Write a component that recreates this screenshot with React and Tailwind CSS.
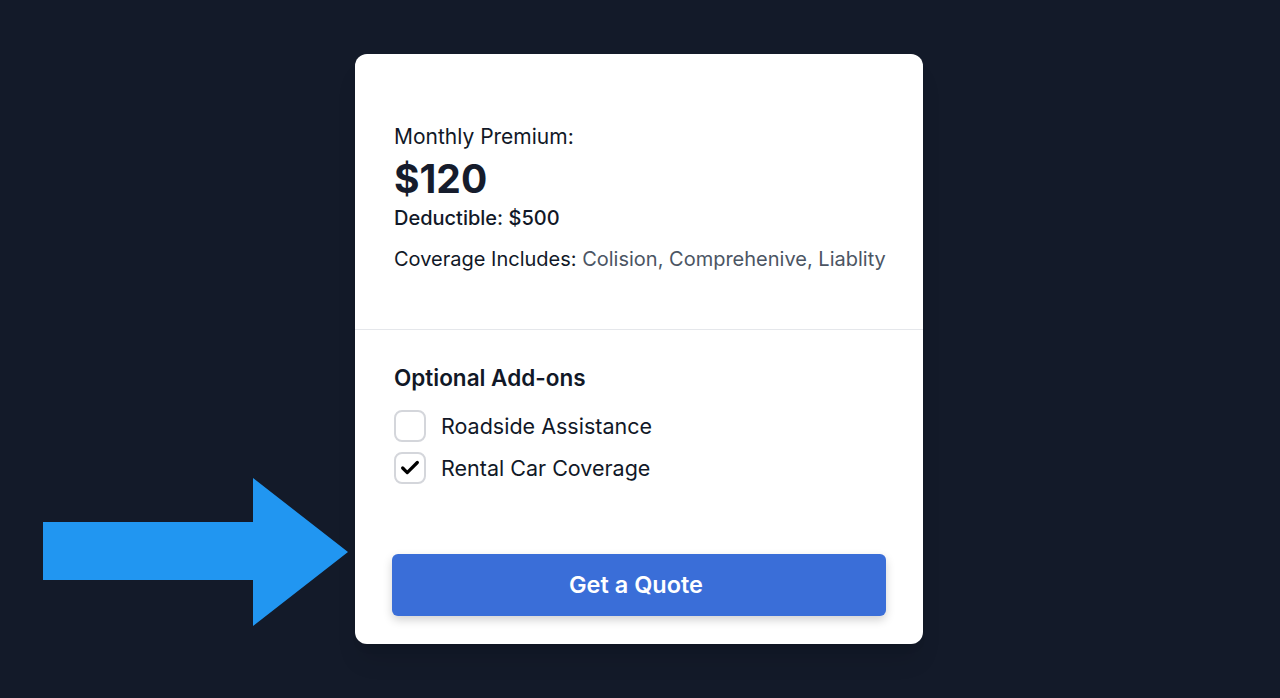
import { Check } from 'lucide-react';

const addOns = [
  { label: 'Roadside Assistance', checked: false },
  { label: 'Rental Car Coverage', checked: true },
];

function Arrow() {
  return (
    <svg
      className="absolute left-[43px] top-[478px]"
      width="306"
      height="149"
      viewBox="0 0 306 149"
    >
      <polygon points="0,44 210,44 210,0 305,74 210,148 210,102 0,102" fill="#2196f1" />
    </svg>
  );
}

export default function App() {
  return (
    <div className="relative min-h-[698px] w-full bg-[#131a29] font-['Inter','Liberation_Sans',sans-serif]">
      <div className="flex justify-center pt-[54px]">
        <div className="w-[568px] translate-x-[-1px] overflow-hidden rounded-[12px] bg-white shadow-xl">
          {/* Summary */}
          <div className="px-[39px] pt-[69px] pb-[57px] text-[#111827]">
            <p className="text-[21px] leading-[28px]">Monthly Premium:</p>
            <p className="mt-[6px] text-[39px] font-bold leading-[44px] text-[#161c2c]">$120</p>
            <p className="mt-[4px] text-[20px] font-medium leading-[26px]">Deductible: $500</p>
            <p className="mt-[15px] whitespace-nowrap text-[20px] leading-[26px]">
              Coverage Includes: <span className="text-[#4b5563]">Colision, Comprehenive, Liablity</span>
            </p>
          </div>

          <div className="h-px bg-[#e5e7eb]" />

          {/* Add-ons */}
          <div className="px-[37px] pt-[34px] pb-[28px]">
            <h2 className="pl-[2px] text-[22.5px] font-semibold leading-[28px] text-[#111827]">Optional Add-ons</h2>
            <div className="mt-[18px] flex flex-col gap-[10px] pl-[2px]">
              {addOns.map((item) => (
                <label key={item.label} className="flex items-center gap-[15px]">
                  <span className="flex h-[32px] w-[32px] items-center justify-center rounded-[8px] border-2 border-[#d4d6db] bg-white">
                    {item.checked && <Check className="h-[22px] w-[22px] text-black" strokeWidth={3.5} />}
                  </span>
                  <span className="text-[21.5px] leading-[28px] text-[#111827]">{item.label}</span>
                </label>
              ))}
            </div>
            <button
              type="button"
              className="mt-[70px] flex h-[62px] w-full items-center justify-center rounded-[6px] bg-[#3a6ed8] pr-[6px] text-[23.5px] font-semibold text-white shadow-[0_4px_10px_rgba(0,0,0,0.18)]"
            >
              Get a Quote
            </button>
          </div>
        </div>
      </div>
      <Arrow />
    </div>
  );
}
